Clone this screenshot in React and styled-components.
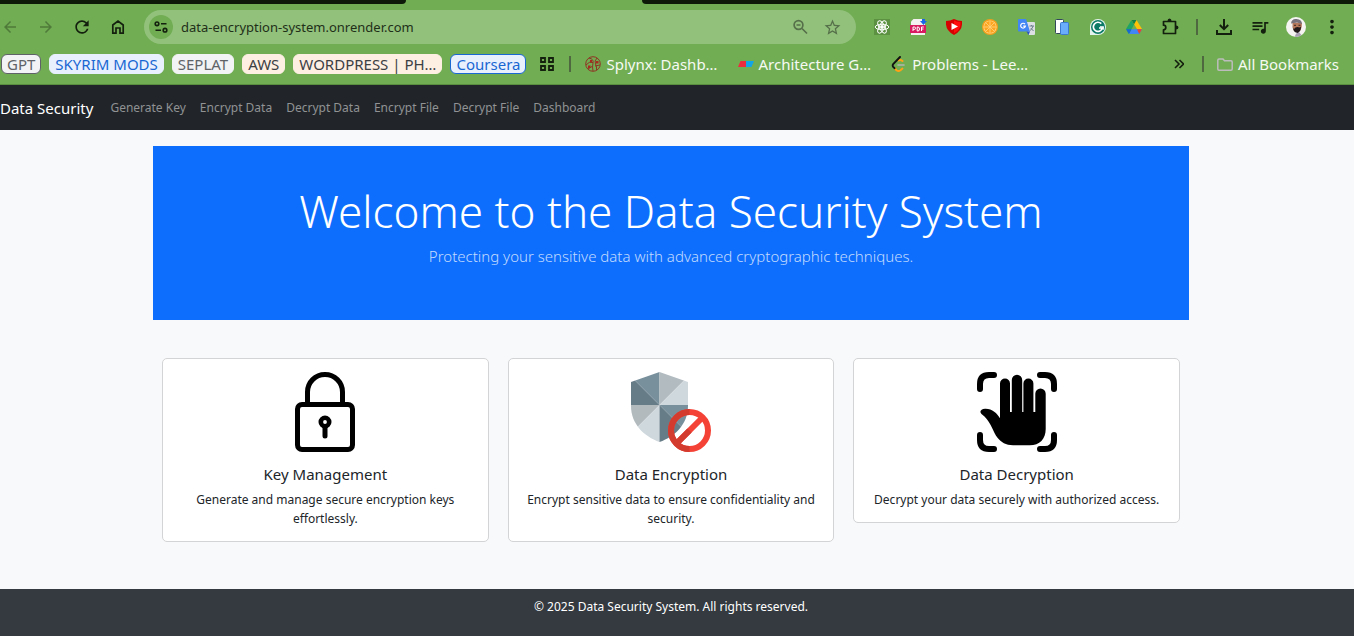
import React from "react";
import styled, { createGlobalStyle } from "styled-components";
import { MdStarBorder, MdQueueMusic, MdMoreVert, MdArrowBack, MdArrowForward, MdRefresh } from "react-icons/md";

const Global = createGlobalStyle`
  *, *::before, *::after { box-sizing: border-box; }
  body {
    margin: 0;
    background: #f8f9fa;
    font-family: "Noto Sans", "Open Sans", sans-serif;
    color: #212529;
  }
  a { color: inherit; text-decoration: none; }
  svg { display: block; flex: none; }
`;

const Page = styled.div`
  min-height: 100vh;
  display: flex;
  flex-direction: column;
`;

const Browser = styled.header`
  background: #71ad53;
  border-bottom: 1px solid #5a8f40;
`;

const TabStrip = styled.div`
  display: flex;
  justify-content: space-between;
  height: 4px;
`;

const TabEdge = styled.div`
  background: #0d1a08;
  width: ${(p) => p.$width};
  border-radius: ${(p) => (p.$side === "left" ? "0 0 8px 0" : "0 0 0 8px")};
`;

const Toolbar = styled.div`
  display: flex;
  align-items: center;
  gap: 16px;
  padding: 6px 12px 0 0;
`;

const IconButton = styled.button`
  width: 20px;
  height: 20px;
  padding: 0;
  border: 0;
  background: none;
  display: flex;
  align-items: center;
  justify-content: center;
  flex: none;
  color: ${(p) => (p.$muted ? "#4f7a39" : "#14200e")};
`;

const AddressBar = styled.div`
  flex: 1;
  min-width: 0;
  height: 34px;
  border-radius: 17px;
  background: #92c17c;
  display: flex;
  align-items: center;
  gap: 12px;
  padding: 0 14px 0 5px;
  color: #56704a;
`;

const SiteInfo = styled(IconButton)`
  width: 24px;
  height: 24px;
  border-radius: 12px;
  background: #71ad53;
`;

const AddressInput = styled.input`
  flex: 1;
  min-width: 0;
  margin-left: -4px;
  border: 0;
  padding: 0;
  background: none;
  outline: none;
  font: 13px/20px "Noto Sans", "Open Sans", sans-serif;
  color: #1f2f18;
`;

const Divider = styled.span`
  width: 2px;
  height: 16px;
  flex: none;
  background: #50683f;
`;

const Bookmarks = styled.nav`
  display: flex;
  align-items: center;
  height: 40px;
  padding: 0 15px 0 1px;
  font-size: 15px;
  line-height: 20px;
  white-space: nowrap;
`;

const ChipList = styled.div`
  display: flex;
  gap: 8px;
`;

const AppsGroup = styled.div`
  display: flex;
  align-items: center;
  gap: 12px;
  margin-left: 11px;
`;

const tones = {
  grey: ["#f1f3f4", "#5f6368"],
  blue: ["#e8f0fe", "#1967d2"],
  peach: ["#feefe3", "#3c4043"],
};

const Chip = styled.button`
  height: 20px;
  padding: 0 5px;
  border: 1px solid ${(p) => (p.$open ? tones[p.$tone][1] : tones[p.$tone][0])};
  border-radius: 6px;
  background: ${(p) => tones[p.$tone][0]};
  color: ${(p) => tones[p.$tone][1]};
  font: 15px/18px "Noto Sans", "Open Sans", sans-serif;
  white-space: nowrap;
`;

const BookmarkList = styled.div`
  display: flex;
  align-items: center;
  gap: 20px;
  margin-left: 14px;
  flex: 1;
`;

const Bookmark = styled.a`
  display: flex;
  align-items: center;
  gap: 5px;
  color: #f6faf3;
`;

const BookmarkEnd = styled.div`
  display: flex;
  align-items: center;
  gap: 13px;
`;

const Navbar = styled.nav`
  display: flex;
  align-items: center;
  gap: 17px;
  height: 45px;
  background: #212529;
`;

const Brand = styled.a`
  color: #fff;
  font-size: 15px;
  line-height: 20px;
`;

const NavLinks = styled.div`
  display: flex;
  gap: 14px;
  font-size: 12px;
  line-height: 19px;
  color: #909294;
`;

const Main = styled.main`
  width: 100%;
  padding: 16px 12px 47px 0;
`;

const Container = styled.div`
  max-width: 1036px;
  margin: 0 auto;
`;

const Hero = styled.section`
  background: #0d6efd;
  text-align: center;
  padding: 38px;
`;

const HeroTitle = styled.h1`
  margin: 0 0 6px;
  color: #fff;
  font-weight: 300;
  font-size: 44px;
  line-height: 54px;
`;

const HeroText = styled.p`
  margin: 0 0 14px;
  color: #c2dbfe;
  font-weight: 300;
  font-size: 15px;
  line-height: 24px;
`;

const Cards = styled.section`
  display: grid;
  grid-template-columns: repeat(3, 1fr);
  align-items: start;
  gap: 19px;
  padding: 38px 9px 0;
`;

const Card = styled.article`
  display: flex;
  flex-direction: column;
  align-items: center;
  padding: 13px;
  border: 1px solid #d3d4d5;
  border-radius: 5px;
  background: #fff;
  text-align: center;
`;

const CardTitle = styled.h2`
  margin: 13px 0 6px;
  font-weight: 400;
  font-size: 15px;
  line-height: 19px;
`;

const CardText = styled.p`
  margin: 0;
  font-size: 12px;
  line-height: 19px;
`;

const Footer = styled.footer`
  flex: 1;
  padding: 8px 12px 20px 0;
  background: #343a40;
  color: #fff;
  text-align: center;
  font-size: 12px;
  line-height: 19px;
`;

const HomeIcon = () => (
  <svg width="14" height="16" viewBox="0 0 14 16" fill="none" stroke="currentColor" strokeWidth="1.700">
    <path d="M1.800 6 7 2l5.200 4v8.200H9V9H5v5.200H1.800z" />
  </svg>
);
const TuneIcon = () => (
  <svg width="14" height="12" viewBox="0 0 14 12" fill="none" stroke="#14200e" strokeWidth="1.6">
    <circle cx="3" cy="2.8" r="1.8" /><path d="M7 2.8h5.5M1.500 9.200H7" /><circle cx="11" cy="9.200" r="1.800" />
  </svg>
);
const ZoomIcon = () => (
  <svg width="16" height="16" viewBox="0 0 16 16" fill="none" stroke="#56704a" strokeWidth="1.7">
    <circle cx="6.500" cy="6" r="4.400" /><path d="M10 9.500l5 5M4.500 6h4" />
  </svg>
);
const ReactExt = () => (
  <svg width="16" height="16" viewBox="0 0 16 16" fill="none" stroke="#fff" strokeWidth="1">
    <path d="M0 0h16v16H0z" fill="#5b9141" stroke="none" />
    <ellipse cx="8" cy="8" rx="6.800" ry="2.700" />
    <ellipse cx="8" cy="8" rx="6.800" ry="2.700" transform="rotate(60 8 8)" />
    <ellipse cx="8" cy="8" rx="6.800" ry="2.700" transform="rotate(120 8 8)" />
    <circle cx="8" cy="8" r="1.400" fill="#fff" />
  </svg>
);
const PdfExt = () => (
  <svg width="17" height="17" viewBox="0 0 17 17">
    <path d="M3.500 0H13l2 3v13H1V2.500z" fill="#f4f0f2" />
    <path d="M0 6h16v8H0z" fill="#d81b60" />
    <path d="M3 12V8h1.500q1 0 1 1.200t-1 1.200H3M7.200 8v4h.7q1.600 0 1.600-2t-1.600-2zM11.500 12V8h2.300M11.500 10h2" fill="none" stroke="#fff" />
    <path d="M12 0h3v2h2l-3.500 4L10 2h2z" fill="#1967e8" />
  </svg>
);
const PlayExt = () => (
  <svg width="16" height="16" viewBox="0 0 16 16">
    <path d="M8 0q4 2 8 2v3.500Q15.500 12 8 16 .5 12 0 5.500V2q4 0 8-2z" fill="#d50000" />
    <path d="M8 1.500q3.500 1.500 6.500 1.500v3Q14 11 8 14.200z" fill="#ff0d0d" />
    <path d="M5.500 4v7L12 7.500z" fill="#fff" />
  </svg>
);
const OrangeExt = () => (
  <svg width="16" height="16" viewBox="0 0 16 16">
    <circle cx="8" cy="8" r="8" fill="#f59e1b" /><circle cx="8" cy="8" r="6.600" fill="#ffd98a" /><circle cx="8" cy="8" r="5.900" fill="#ffa51f" />
    <path d="M8 2v12M2 8h12M3.800 3.800l8.400 8.400M12.200 3.800l-8.400 8.400" stroke="#ffd27a" strokeWidth=".9" />
  </svg>
);
const TranslateExt = () => (
  <svg width="17" height="16" viewBox="0 0 17 16">
    <path d="M6 3h10q1 0 1 1v11q0 1-1 1h-5z" fill="#dcdfe3" />
    <path d="M1 0h7l4 12.500H1q-1 0-1-1V1q0-1 1-1z" fill="#4285f4" />
    <path d="M8.500 12.500H12L10.500 16z" fill="#2a56c6" />
    <path d="M7 5.200a2.400 2.400 0 1 0 .4 2H5.200" fill="none" stroke="#fff" strokeWidth="1.200" />
    <path d="M11.500 7H16M13.500 6v1M15 7q-.5 3-3 4.500M12.800 9l2.700 3" fill="none" stroke="#6b7f8c" />
  </svg>
);
const PagesExt = () => (
  <svg width="14" height="16" viewBox="0 0 14 16" strokeWidth="1">
    <rect x=".5" y=".5" width="8" height="14" rx="1" fill="#fff" stroke="#33475a" />
    <rect x="5.500" y="3.500" width="8" height="12" rx="1" fill="#6aaefb" stroke="#3b78cf" />
  </svg>
);
const GrammarExt = () => (
  <svg width="16" height="16" viewBox="0 0 16 16">
    <path d="M8 0a8 8 0 1 1 0 16H0V8a8 8 0 0 1 8-8z" fill="#e5f3ef" />
    <circle cx="8" cy="8" r="7" fill="#0b7a66" />
    <path d="M11.300 4.700A4.600 4.600 0 1 0 12.400 9H9" fill="none" stroke="#fff" strokeWidth="1.700" />
    <path d="M10 7.800h3.200v3" fill="none" stroke="#fff" strokeWidth="1.300" />
  </svg>
);
const DriveExt = () => (
  <svg width="16" height="14" viewBox="0 0 16 14">
    <path d="M5.500 0 8 4.500 3 14 0 9z" fill="#1fa463" />
    <path d="M5.500 0h5L16 9h-5z" fill="#ffc107" />
    <path d="M3 14 5.500 9.200H16L13.200 14z" fill="#4285f4" />
    <path d="M11 9.200h5L13.200 14z" fill="#ea4335" />
    <path d="M0 9.200h5.500L3 14z" fill="#1967d2" />
    <path d="M5.500 0h5L8 4.500z" fill="#11804a" />
  </svg>
);
const PuzzleIcon = () => (
  <svg width="18" height="18" viewBox="0 0 18 18" fill="none" stroke="currentColor" strokeWidth="1.700">
    <path d="M2.500 3.500h12v12h-12v-3.700a2.300 2.300 0 0 0 0-4.600z" strokeLinejoin="round" />
    <path d="M6.500 3q0-2.500 2-2.500t2 2.500zM15 7.500q2.500 0 2.500 2t-2.500 2z" fill="currentColor" stroke="none" />
  </svg>
);
const DownloadIcon = () => (
  <svg width="18" height="18" viewBox="0 0 18 18" fill="none" stroke="currentColor" strokeWidth="2">
    <path d="M9 1v10M4.800 7 9 11.200 13.200 7M2 12v4h14v-4" />
  </svg>
);
const Avatar = () => (
  <svg width="20" height="20" viewBox="0 0 20 20">
    <clipPath id="face"><circle cx="10" cy="10" r="10" /></clipPath>
    <g clipPath="url(#face)">
      <path d="M0 0h20v20H0z" fill="#f6f4f2" />
      <path d="M9 20q0-4 4-5l4 5z" fill="#a9a0b4" />
      <path d="M6.500 5.500Q6 15 11 15t5-9z" fill="#b5775a" />
      <path d="M6.500 8q0 3 1.500 4l1.500-1.500q2-1 4 0l1.500-1q0 5-3.500 6.500-5-1-5-8z" fill="#21181a" />
      <path d="M8 8.300h2M12.500 8.300h2" stroke="#3a2620" strokeWidth="1" />
      <path d="M5 6.500Q5.500 1.500 10.500 2q5.500.5 5.500 5l-5-1.500z" fill="#77717c" />
    </g>
  </svg>
);
const AppsIcon = () => (
  <svg width="14" height="14" viewBox="0 0 14 14" fill="none" stroke="#14200e" strokeWidth="1.800">
    <path d="M1 1h4v4H1zM9 1h4v4H9zM1 9h4v4H1zM9 9h4v4H9z" />
  </svg>
);
const SplynxIcon = () => (
  <svg width="16" height="16" viewBox="0 0 16 16" fill="none" stroke="#8f3524" strokeWidth="1">
    <circle cx="8" cy="8" r="7.300" />
    <path d="M4 2q5 1 4 5t0 8M12 2q-3 3-1.500 6t1 6M1 9q3-4 7-2.500M3 13l4-2.500M10 10l5-1" />
    <path d="M3 9.500h2.500V12H3zM11 5h2.500v2.500H11zM5 4h2v2H5z" fill="#a82a1e" stroke="none" />
  </svg>
);
const ArchIcon = () => (
  <svg width="16" height="16" viewBox="0 0 16 16">
    <path d="M2.500 5H8v6H0z" fill="#ed2b3f" /><path d="M8 5h8l-2.500 6H8z" fill="#12a5e8" />
  </svg>
);
const LeetIcon = () => (
  <svg width="16" height="16" viewBox="0 0 16 16" fill="none" strokeWidth="1.900" strokeLinecap="round">
    <path d="M11.500 5Q9.500 3.200 7.500 4.500M4 12.500l1.500 1.700q2 1.500 4 0L11.500 12.500" stroke="#ffa116" />
    <path d="M9 1 2.200 8q-1 1.500 0 2.800l1.300 1.400" stroke="#111" />
    <path d="M7 9h6" stroke="#b3b3b3" strokeWidth="1.500" />
  </svg>
);
const FolderIcon = () => (
  <svg width="16" height="13" viewBox="0 0 16 13" fill="none" stroke="#bcbcbc" strokeWidth="1.500">
    <path d="M2 1h4l1.500 1.800H14q1.200 0 1.200 1.200v7q0 1.200-1.200 1.200H2Q.8 12.200.8 11V2.200Q.8 1 2 1z" />
  </svg>
);
const MoreIcon = () => (
  <svg width="10" height="10" viewBox="0 0 10 10" fill="none" stroke="#14200e" strokeWidth="1.600">
    <path d="M1 1l4 4-4 4M5.500 1l4 4-4 4" />
  </svg>
);

const LockArt = () => (
  <svg width="80" height="80" viewBox="0 0 80 80" fill="none" stroke="#000" strokeWidth="5">
    <rect x="12.500" y="32.500" width="55" height="45" rx="4.500" />
    <path d="M22.500 32V20a17.500 17.500 0 0 1 35 0v12" />
    <circle cx="40" cy="50" r="4.200" strokeWidth="4.600" />
    <path d="M40 55v9" strokeLinecap="round" />
  </svg>
);
const ShieldArt = () => (
  <svg width="80" height="80" viewBox="0 0 80 80">
    <clipPath id="shield"><path d="M28.500 0 57 10v24C57 52 44 64.500 28.500 70 13 64.500 0 52 0 34V10z" /></clipPath>
    <g clipPath="url(#shield)">
      <path d="M0 4.500 28.500 33H0z" fill="#667c87" />
      <path d="M0 0h28.500v33L0 4.500z" fill="#78909c" />
      <path d="M28.500 0H57v4.500L28.500 33z" fill="#b2bbc0" />
      <path d="M57 4.500V33H28.500z" fill="#cfd8dd" />
      <path d="M0 33h28.500L0 61.500z" fill="#b2babe" />
      <path d="M28.500 33v37H0v-8.500z" fill="#cfd8dd" />
      <path d="M28.500 33H57v28.500z" fill="#78909c" />
      <path d="M28.500 33 57 61.500V70H28.500z" fill="#667c87" />
    </g>
    <circle cx="58.500" cy="58.500" r="18.500" fill="none" stroke="#f44336" strokeWidth="6" />
    <path d="M45.500 71.500l26-26" stroke="#f44336" strokeWidth="6" />
    <path d="M58.500 40a18.500 18.500 0 0 0 0 37M45.500 71.500l13-13" fill="none" stroke="#d33b2f" strokeWidth="6" />
  </svg>
);
const HandArt = () => (
  <svg width="80" height="80" viewBox="0 0 80 80">
    <path d="M17 3h-5q-9 0-9 9v5M63 3h5q9 0 9 9v5M17 77h-5q-9 0-9-9v-5M63 77h5q9 0 9-9v-5" fill="none" stroke="#000" strokeWidth="6" strokeLinecap="round" />
    <path d="M23 46.300V11.500a5 5 0 0 1 10 0V40h1.800V8a5.200 5.200 0 0 1 10.400 0v32h1.200V11.500a5 5 0 0 1 10 0V40h1.900V21.700a5.200 5.200 0 0 1 10.400 0V57c0 10-6 16.300-16 16.300H36c-7 0-12-3-15.500-7.500C16 60 14.500 51.500 7.500 44.500L4.500 42c-2.500-2.500-.5-5 3.500-5.300 7-.3 12 4.300 15 9.600z" />
  </svg>
);

const extensions = [
  ["React Developer Tools", ReactExt], ["PDF tools", PdfExt], ["Video blocker", PlayExt],
  ["Orange", OrangeExt], ["Translate", TranslateExt], ["Pages", PagesExt],
  ["Grammar", GrammarExt], ["Drive", DriveExt], ["Extensions", PuzzleIcon],
];
const chips = [
  ["GPT", "grey", true], ["SKYRIM MODS", "blue"], ["SEPLAT", "grey"], ["AWS", "peach"],
  ["WORDPRESS | PH…", "peach"], ["Coursera", "blue", true],
];
const bookmarks = [["Splynx: Dashb…", SplynxIcon], ["Architecture G…", ArchIcon], ["Problems - Lee…", LeetIcon]];
const links = ["Generate Key", "Encrypt Data", "Decrypt Data", "Encrypt File", "Decrypt File", "Dashboard"];
const cards = [
  ["Key Management", "Generate and manage secure encryption keys effortlessly.", LockArt],
  ["Data Encryption", "Encrypt sensitive data to ensure confidentiality and security.", ShieldArt],
  ["Data Decryption", "Decrypt your data securely with authorized access.", HandArt],
];

export default function App() {
  return (
    <Page>
      <Global />
      <Browser>
        <TabStrip>
          <TabEdge $side="left" $width="30%" />
          <TabEdge $side="right" $width="52.600%" />
        </TabStrip>
        <Toolbar>
          <IconButton $muted aria-label="Back"><MdArrowBack size={18} /></IconButton>
          <IconButton $muted aria-label="Forward"><MdArrowForward size={18} /></IconButton>
          <IconButton aria-label="Reload"><MdRefresh size={20} /></IconButton>
          <IconButton aria-label="Home"><HomeIcon /></IconButton>
          <AddressBar>
            <SiteInfo aria-label="Site information"><TuneIcon /></SiteInfo>
            <AddressInput aria-label="Address" defaultValue="data-encryption-system.onrender.com" />
            <IconButton aria-label="Zoom"><ZoomIcon /></IconButton>
            <IconButton $muted aria-label="Bookmark this page"><MdStarBorder size={19} color="#56704a" /></IconButton>
          </AddressBar>
          {extensions.map(([name, Icon]) => (
            <IconButton key={name} aria-label={name}><Icon /></IconButton>
          ))}
          <Divider />
          <IconButton aria-label="Downloads"><DownloadIcon /></IconButton>
          <IconButton aria-label="Media"><MdQueueMusic size={20} /></IconButton>
          <IconButton aria-label="Profile"><Avatar /></IconButton>
          <IconButton aria-label="Menu"><MdMoreVert size={22} /></IconButton>
        </Toolbar>
        <Bookmarks aria-label="Bookmarks">
          <ChipList>
            {chips.map(([label, tone, open]) => (
              <Chip key={label} $tone={tone} $open={open}>{label}</Chip>
            ))}
          </ChipList>
          <AppsGroup>
            <IconButton aria-label="Apps"><AppsIcon /></IconButton>
            <Divider />
          </AppsGroup>
          <BookmarkList>
            {bookmarks.map(([label, Icon]) => (
              <Bookmark key={label} href="#"><Icon />{label}</Bookmark>
            ))}
          </BookmarkList>
          <BookmarkEnd>
            <IconButton aria-label="More bookmarks"><MoreIcon /></IconButton>
            <Divider />
            <Bookmark href="#"><FolderIcon />All Bookmarks</Bookmark>
          </BookmarkEnd>
        </Bookmarks>
      </Browser>
      <Navbar>
        <Brand href="#">Data Security</Brand>
        <NavLinks>
          {links.map((l) => <a key={l} href="#">{l}</a>)}
        </NavLinks>
      </Navbar>
      <Main>
        <Container>
          <Hero>
            <HeroTitle>Welcome to the Data Security System</HeroTitle>
            <HeroText>Protecting your sensitive data with advanced cryptographic techniques.</HeroText>
          </Hero>
          <Cards>
            {cards.map(([title, text, Art]) => (
              <Card key={title}>
                <Art />
                <CardTitle>{title}</CardTitle>
                <CardText>{text}</CardText>
              </Card>
            ))}
          </Cards>
        </Container>
      </Main>
      <Footer>© 2025 Data Security System. All rights reserved.</Footer>
    </Page>
  );
}
